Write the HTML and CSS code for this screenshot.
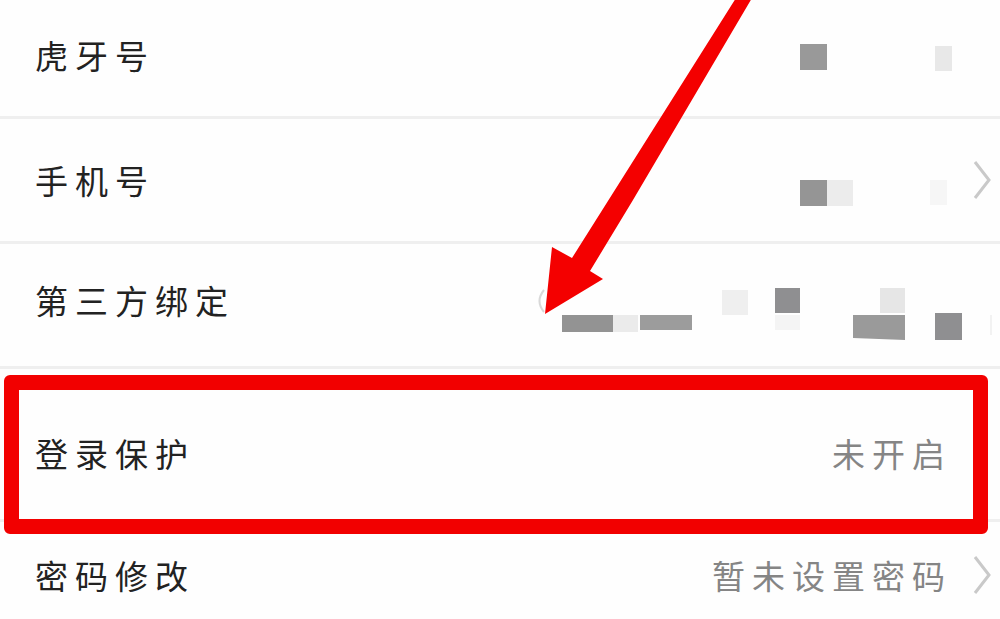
FILE: index.html
```html
<!DOCTYPE html>
<html lang="zh-CN">
<head>
  <meta charset="UTF-8" />
  <title>账号与安全</title>
  <link rel="stylesheet" href="styles.css">
</head>
<body>

  <div class="screen">
    <div class="list">

      <div class="row">
        <span class="label">虎牙号</span>
        <div class="side">
          <svg class="mosaic" width="152" height="34" viewBox="0 0 152 34">
            <rect x="0" y="6" width="27" height="26" fill="#999999"/>
            <rect x="135" y="8" width="20" height="25" fill="#e8e8e8"/>
          </svg>
          <svg class="chevron hidden" width="20" height="40" viewBox="0 0 20 40">
            <polyline points="3,2 17,20 3,38"/>
          </svg>
        </div>
      </div>

      <div class="row">
        <span class="label">手机号</span>
        <div class="side">
          <svg class="mosaic" width="152" height="52" viewBox="0 0 152 52">
            <rect x="0" y="26" width="27" height="26" fill="#959595"/>
            <rect x="27" y="26" width="26" height="26" fill="#ececec"/>
            <rect x="130" y="26" width="17" height="25" fill="#f6f6f6"/>
          </svg>
          <svg class="chevron" width="20" height="40" viewBox="0 0 20 40">
            <polyline points="3,2 17,20 3,38"/>
          </svg>
        </div>
      </div>

      <div class="row row-bind">
        <span class="label">第三方绑定</span>
        <div class="side">
          <svg class="mosaic" width="457" height="70" viewBox="0 0 457 70">
            <path d="M9 20 Q0 31 9 42" fill="none" stroke="#d8d8d8" stroke-width="2"/>
            <rect x="27" y="45" width="51" height="17" fill="#939393"/>
            <rect x="78" y="45" width="25" height="17" fill="#ebebeb"/>
            <rect x="105" y="45" width="52" height="15" fill="#9c9c9c"/>
            <rect x="187" y="20" width="26" height="25" fill="#efefef"/>
            <rect x="240" y="18" width="25" height="25" fill="#8f8f91"/>
            <rect x="240" y="45" width="25" height="15" fill="#f4f4f4"/>
            <rect x="345" y="18" width="25" height="25" fill="#e6e6e6"/>
            <polygon points="318,45 370,45 370,70 318,68" fill="#9a9a9a"/>
            <rect x="400" y="43" width="27" height="27" fill="#8f8f91"/>
            <rect x="455" y="45" width="2" height="20" fill="#f2f2f2"/>
          </svg>
        </div>
      </div>

      <div class="row row-login">
        <span class="label">登录保护</span>
        <div class="side">
          <span class="value">未开启</span>
          <svg class="chevron hidden" width="20" height="40" viewBox="0 0 20 40">
            <polyline points="3,2 17,20 3,38"/>
          </svg>
        </div>
      </div>

      <div class="row row-last">
        <span class="label">密码修改</span>
        <div class="side">
          <span class="value">暂未设置密码</span>
          <svg class="chevron" width="20" height="40" viewBox="0 0 20 40">
            <polyline points="3,2 17,20 3,38"/>
          </svg>
        </div>
      </div>

    </div>

    <!-- annotations drawn over the screenshot -->
    <div class="highlight"></div>
    <svg class="arrow" width="1000" height="619" viewBox="0 0 1000 619">
      <polygon points="545,314 552,247 572,258 736,-2 752,-2 633,200 590,271 603,279" fill="#f40000"/>
    </svg>
  </div>

</body>
</html>
```

FILE: styles.css
```css
* {
  box-sizing: border-box;
}

body {
  margin: 0;
  background: #fff;
  font-family: "Noto Sans CJK SC", "Noto Sans", sans-serif;
}

.screen {
  position: relative;
  width: 1000px;
  height: 619px;
  overflow: hidden;
  background: #fefefe;
}

.list {
  margin-top: -6px;
}

.row {
  height: 122px;
  display: flex;
  align-items: center;
  justify-content: space-between;
  padding: 0 8px 0 35px;
  border-bottom: 3px solid #efefef;
  box-sizing: content-box;
}

.label {
  font-size: 33px;
  letter-spacing: 7px;
  color: #222;
}

.side {
  display: flex;
  align-items: center;
  gap: 20px;
}

.mosaic {
  display: block;
}

.value {
  font-size: 33px;
  letter-spacing: 7px;
  color: #858585;
}

.chevron {
  display: block;
}

.chevron polyline {
  fill: none;
  stroke: #c9c9c9;
  stroke-width: 3;
}

.chevron.hidden {
  visibility: hidden;
}

.row-bind .label {
  margin-bottom: 10px;
}

.row-login {
  height: 132px;
  padding-top: 18px;
}

.row-last {
  height: 106px;
  border-bottom: none;
  padding-bottom: 16px;
}

.highlight {
  position: absolute;
  left: 4px;
  top: 375px;
  width: 984px;
  height: 159px;
  border: 15px solid #f20000;
  border-radius: 6px;
}

.arrow {
  position: absolute;
  left: 0;
  top: 0;
}
```
